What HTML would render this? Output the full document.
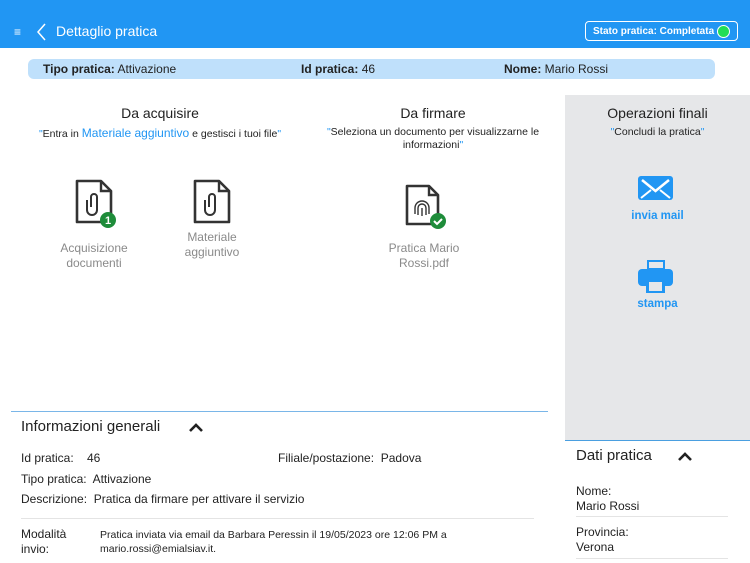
<!DOCTYPE html>
<html><head><meta charset="utf-8"><style>
*{margin:0;padding:0;box-sizing:border-box}
body{width:750px;height:563px;overflow:hidden;background:#fff;font-family:"Liberation Sans",sans-serif;color:#222;position:relative}
.a{position:absolute;white-space:nowrap}
.hdr{position:absolute;left:0;top:0;width:750px;height:48px;background:#2196F3}
.c{text-align:center}
.b{font-weight:bold}
.q{color:#2196F3}
.g{color:#8a8a8a}
</style></head><body>
<div class="hdr"></div>
<div class="a" style="left:14px;top:25px;color:#fff;font-size:12px">≡</div>
<svg class="a" style="left:35px;top:22px" width="12" height="20"><path d="M10 2L3 10L10 18" stroke="#fff" stroke-width="1.5" fill="none"/></svg>
<div class="a" style="left:56px;top:23px;color:#fff;font-size:14px">Dettaglio pratica</div>
<div class="a" style="left:585px;top:21px;width:153px;height:20px;border:1.5px solid #fff;border-radius:4px;color:#fff;font-size:10px;font-weight:bold;padding:4px 0 0 7px">Stato pratica: Completata</div>
<div class="a" style="left:717px;top:25px;width:13px;height:13px;border-radius:50%;background:#22dd55;border:1px solid #fff"></div>
<div class="a" style="left:28px;top:59px;width:687px;height:20px;background:#bfe0fb;border-radius:6px"></div>
<div class="a" style="left:43px;top:62px;font-size:12px"><b>Tipo pratica:</b> Attivazione</div>
<div class="a" style="left:301px;top:62px;font-size:12px"><b>Id pratica:</b> 46</div>
<div class="a" style="left:504px;top:62px;font-size:12px"><b>Nome:</b> Mario Rossi</div>
<div class="a" style="left:565px;top:95px;width:185px;height:346px;background:#e6e7e9;border-bottom:1.5px solid #4a9fe0"></div>
<div class="a c" style="left:60px;top:105px;width:200px;font-size:14px">Da acquisire</div>
<div class="a c" style="left:10px;top:126px;width:300px;font-size:10.5px"><span class="q">"</span>Entra in <span class="q" style="font-size:12px">Materiale aggiuntivo</span> e gestisci i tuoi file<span class="q">"</span></div>
<div class="a c" style="left:333px;top:105px;width:200px;font-size:14px">Da firmare</div>
<div class="a c" style="left:313px;top:126px;width:240px;font-size:10.5px;white-space:normal;line-height:13px"><span class="q">"</span>Seleziona un documento per visualizzarne le informazioni<span class="q">"</span></div>
<div class="a c" style="left:565px;top:105px;width:185px;font-size:14px">Operazioni finali</div>
<div class="a c" style="left:565px;top:126px;width:185px;font-size:10.5px"><span class="q">"</span>Concludi la pratica<span class="q">"</span></div>
<svg class="a" style="left:74px;top:179px" width="46" height="52"><path d="M3 2H27L37 12V43H3Z" stroke="#333" stroke-width="2.6" fill="none" stroke-linejoin="round"/><path d="M27 2V12H37" stroke="#333" stroke-width="2.4" fill="none"/><path d="M17 28V18a3 3 0 0 1 6 0V31a5 5 0 0 1-10 0V21" stroke="#333" stroke-width="2" fill="none"/><circle cx="34" cy="41" r="8" fill="#1e8c3a"/><text x="34" y="45" font-size="11" font-weight="bold" fill="#fff" text-anchor="middle" font-family="Liberation Sans">1</text></svg>
<div class="a c g" style="left:44px;top:241px;width:100px;font-size:12px;line-height:15px">Acquisizione<br>documenti</div>
<svg class="a" style="left:192px;top:179px" width="46" height="50"><path d="M3 2H27L37 12V43H3Z" stroke="#333" stroke-width="2.6" fill="none" stroke-linejoin="round"/><path d="M27 2V12H37" stroke="#333" stroke-width="2.4" fill="none"/><path d="M17 28V18a3 3 0 0 1 6 0V31a5 5 0 0 1-10 0V21" stroke="#333" stroke-width="2" fill="none"/></svg>
<div class="a c g" style="left:162px;top:230px;width:100px;font-size:12px;line-height:15px">Materiale<br>aggiuntivo</div>
<svg class="a" style="left:404px;top:184px" width="46" height="48"><path d="M3 2H25L34 11V40H3Z" stroke="#333" stroke-width="2.6" fill="none" stroke-linejoin="round"/><path d="M25 2V11H34" stroke="#333" stroke-width="2.4" fill="none"/><g stroke="#333" stroke-width="1.4" fill="none"><path d="M11 30v-6a7 7 0 0 1 14 0v6"/><path d="M14 31v-7a4 4 0 0 1 8 0v7"/><path d="M18 32v-8"/></g><circle cx="34" cy="37" r="8" fill="#1e8c3a"/><path d="M30 37l3 3 5-5" stroke="#fff" stroke-width="2" fill="none"/></svg>
<div class="a c g" style="left:374px;top:241px;width:100px;font-size:12px;line-height:15px">Pratica Mario<br>Rossi.pdf</div>
<svg class="a" style="left:638px;top:176px" width="36" height="25"><rect x="0" y="0" width="35" height="24" rx="3" fill="#2196F3"/><path d="M4 4L17.5 15L31 4" stroke="#fff" stroke-width="2.5" fill="none"/><path d="M3 22l10-8M32 22l-10-8" stroke="#fff" stroke-width="2"/></svg>
<div class="a c q b" style="left:565px;top:210px;width:185px;font-size:11.5px">invia mail</div>
<svg class="a" style="left:638px;top:260px" width="36" height="34"><rect x="9" y="0" width="18" height="9" fill="#2196F3"/><rect x="11" y="2" width="14" height="6" fill="#e6e7e9"/><rect x="0" y="9" width="35" height="17" rx="4" fill="#2196F3"/><rect x="8" y="19" width="19" height="14" fill="#2196F3"/><rect x="11" y="22" width="13" height="9" fill="#e6e7e9"/></svg>
<div class="a c q b" style="left:565px;top:298px;width:185px;font-size:11.5px">stampa</div>
<div class="a" style="left:11px;top:411px;width:537px;height:1px;background:#7ab6e8"></div>
<div class="a" style="left:21px;top:418px;font-size:15px">Informazioni generali</div>
<svg class="a" style="left:188px;top:421px" width="16" height="12"><path d="M2 10L8 4L14 10" stroke="#222" stroke-width="2.6" fill="none"/></svg>
<div class="a" style="left:21px;top:451px;font-size:12px"><span style="display:inline-block;width:66px">Id pratica:</span>46</div>
<div class="a" style="left:278px;top:451px;font-size:12px">Filiale/postazione:&nbsp; Padova</div>
<div class="a" style="left:21px;top:472px;font-size:12px">Tipo pratica:&nbsp; Attivazione</div>
<div class="a" style="left:21px;top:492px;font-size:12px">Descrizione:&nbsp; Pratica da firmare per attivare il servizio</div>
<div class="a" style="left:21px;top:518px;width:513px;height:1px;background:#e4e4e4"></div>
<div class="a" style="left:21px;top:527px;font-size:12px;line-height:15px">Modalità<br>invio:</div>
<div class="a" style="left:100px;top:528px;font-size:10.5px;line-height:14px">Pratica inviata via email da Barbara Peressin il 19/05/2023 ore 12:06 PM a<br>mario.rossi@emialsiav.it.</div>
<div class="a" style="left:576px;top:447px;font-size:15px">Dati pratica</div>
<svg class="a" style="left:677px;top:450px" width="16" height="12"><path d="M2 10L8 4L14 10" stroke="#222" stroke-width="2.6" fill="none"/></svg>
<div class="a" style="left:576px;top:484px;font-size:12px;line-height:15px">Nome:<br>Mario Rossi</div>
<div class="a" style="left:576px;top:516px;width:152px;height:1px;background:#e4e4e4"></div>
<div class="a" style="left:576px;top:525px;font-size:12px;line-height:15px">Provincia:<br>Verona</div>
<div class="a" style="left:576px;top:558px;width:152px;height:1px;background:#e4e4e4"></div>
</body></html>
